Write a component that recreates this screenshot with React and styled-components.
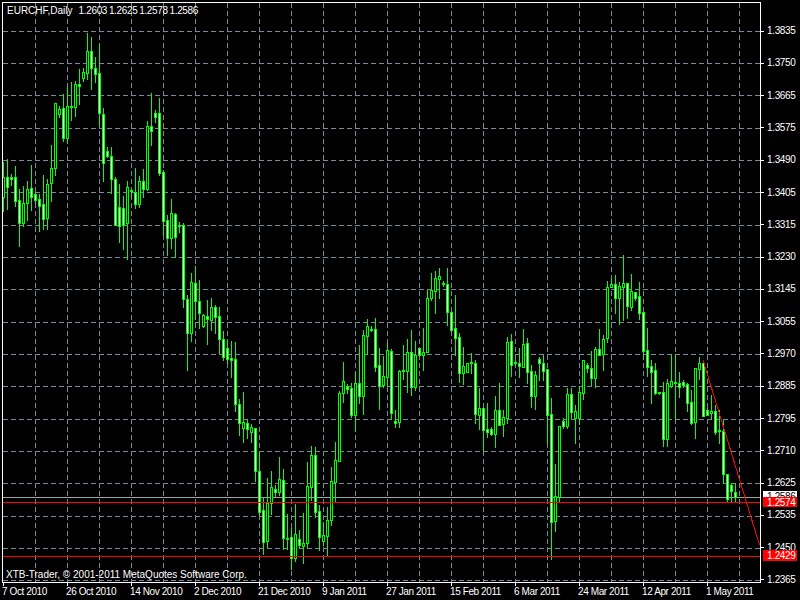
import React from "react";
import styled, { createGlobalStyle } from "styled-components";

const GlobalStyle = createGlobalStyle`
  html, body { margin: 0; padding: 0; background: #000; overflow: hidden; }
`;

const candles = [
[162,211,177,197,0],[159,209,177,187,1],[174,185,177,179,1],[166,206,177,201,1],[189,246,200,223,1],[186,226,203,223,0],[181,220,189,203,0],[165,210,188,197,1],
[192,203,194,200,1],[194,231,199,206,1],[175,229,204,219,1],[179,229,184,218,0],[145,201,168,183,0],[103,175,103,168,0],[106,117,109,114,0],[94,141,108,138,1],
[87,143,106,138,0],[82,120,106,107,1],[81,116,84,107,0],[69,104,84,86,1],[68,81,72,78,0],[33,79,51,73,0],[37,89,51,68,1],[57,82,68,74,1],
[44,126,73,113,1],[108,181,114,163,1],[147,157,151,156,1],[147,193,156,179,1],[177,225,179,225,1],[184,242,207,226,1],[196,249,208,225,1],[181,259,187,223,0],
[189,197,190,191,1],[168,208,192,204,1],[176,207,181,204,0],[169,197,181,189,1],[121,190,126,189,0],[93,145,126,131,1],[110,122,113,117,1],[98,175,113,173,1],
[170,235,172,221,1],[215,255,220,238,1],[199,248,213,238,0],[213,257,214,237,1],[222,232,225,226,1],[223,307,225,299,1],[295,370,299,333,1],[273,341,282,333,0],
[266,319,283,301,1],[280,328,301,313,1],[314,327,315,326,0],[300,344,316,319,1],[298,330,307,320,0],[305,333,307,317,1],[307,353,316,339,1],[331,360,339,357,1],
[340,363,348,359,1],[341,377,358,360,1],[342,411,359,404,1],[399,435,404,423,1],[392,442,422,428,0],[419,438,423,429,1],[424,442,427,432,0],[428,481,428,471,1],
[452,515,471,512,1],[498,554,510,542,1],[478,547,503,541,0],[471,514,487,503,0],[485,496,489,492,1],[457,495,479,492,0],[469,549,480,538,1],[514,549,538,539,1],
[528,569,537,558,1],[504,561,534,558,0],[530,548,539,545,1],[513,563,543,546,0],[462,547,486,543,0],[446,500,455,487,0],[447,517,455,512,1],[505,550,511,537,1],
[522,545,535,541,0],[507,556,520,536,0],[467,525,481,520,0],[442,502,460,482,0],[391,461,393,461,0],[362,402,381,393,0],[384,393,386,389,1],[383,417,388,415,1],
[372,431,383,415,0],[345,403,383,396,1],[330,414,335,396,0],[319,354,326,336,0],[326,331,329,330,1],[318,371,329,367,1],[348,409,365,386,1],[356,387,376,385,0],
[343,386,350,377,0],[349,419,351,413,1],[410,427,421,423,1],[370,427,371,422,0],[345,379,370,371,1],[339,392,352,371,0],[330,395,352,387,1],[341,390,355,387,0],
[348,355,348,355,1],[328,370,352,355,0],[290,352,298,352,0],[273,300,290,298,0],[271,313,278,291,0],[268,298,276,279,0],[281,286,283,284,1],[268,325,284,312,1],
[311,331,312,330,1],[295,355,328,338,1],[333,382,337,373,1],[347,384,366,373,0],[363,372,363,372,0],[353,373,362,363,1],[360,423,363,414,1],[388,429,408,415,0],
[408,450,408,430,1],[403,437,429,432,1],[427,435,429,434,1],[396,447,410,434,0],[383,425,410,425,1],[410,436,417,424,0],[337,423,342,418,0],[334,376,341,365,1],
[360,365,362,363,1],[348,377,363,366,1],[329,365,344,367,0],[338,383,343,372,1],[365,407,371,396,1],[371,409,375,396,0],[357,380,359,363,1],[355,380,363,371,1],
[369,443,369,415,1],[398,559,414,522,1],[464,531,496,521,0],[426,501,426,497,0],[418,428,421,426,1],[388,428,394,426,0],[388,418,394,412,1],[405,443,411,418,0],
[386,424,392,418,0],[360,399,360,393,0],[363,372,365,368,1],[351,385,368,378,1],[347,387,349,378,0],[329,355,349,355,1],[335,370,339,354,0],[281,342,287,338,0],
[278,287,284,287,0],[275,313,284,298,1],[282,324,286,298,0],[255,320,283,287,0],[283,318,283,306,1],[274,310,291,307,0],[292,300,292,298,1],[282,319,296,313,1],
[312,359,312,351,1],[328,376,350,367,1],[360,403,366,372,1],[363,394,370,393,1],[392,394,392,393,1],[382,446,392,439,1],[379,446,383,439,0],[354,387,381,386,0],
[354,419,382,383,1],[372,397,383,387,1],[380,387,382,385,1],[383,411,384,403,1],[390,424,402,423,1],[368,438,368,422,0],[357,379,363,369,0],[360,416,363,416,1],
[408,415,410,415,1],[395,419,411,413,0],[405,434,411,432,1],[410,443,430,431,1],[420,483,431,474,1],[474,501,474,499,1],[483,501,485,491,1],[483,501,492,497,1],
];

const hLines = [31, 63, 95, 128, 160, 192, 225, 257, 289, 322, 354, 386, 419, 451, 483, 516, 548, 580];
const vLines = Array.from({ length: 23 }, (_, k) => 35 + 32 * k);
const prices = ["1.3835", "1.3750", "1.3665", "1.3575", "1.3490", "1.3405", "1.3315", "1.3230", "1.3145", "1.3055", "1.2970", "1.2885", "1.2795", "1.2710", "1.2625", "1.2535", "1.2450", "1.2365"];
const dates = ["7 Oct 2010", "26 Oct 2010", "14 Nov 2010", "2 Dec 2010", "21 Dec 2010", "9 Jan 2011", "27 Jan 2011", "15 Feb 2011", "6 Mar 2011", "24 Mar 2011", "12 Apr 2011", "1 May 2011"];

const FONT = `"Liberation Sans", Arial, sans-serif`;
const GRID = "#778899";
const GREEN = "#00ff00";
const RED = "#ff0000";
const TIGHT = "-0.35px";

const Frame = styled.div`
  width: 800px;
  height: 600px;
  background: #000;
  display: grid;
  grid-template-columns: 761px 39px;
  grid-template-rows: 583px 17px;
  overflow: hidden;
  font-family: ${FONT};
  font-size: 10px;
  color: #fff;
`;

const Plot = styled.div`
  position: relative;
  box-sizing: border-box;
  margin: 2px 0 0 2px;
  border: 1px solid #fff;
  overflow: hidden;
`;

const ChartSvg = styled.svg`
  display: block;
  width: 757px;
  height: 579px;
  shape-rendering: crispEdges;
`;

const Title = styled.div`
  position: absolute;
  left: 4px;
  top: 2px;
  display: flex;
  gap: 6px;
  line-height: 12px;
  white-space: pre;
`;

const Quotes = styled.span`
  letter-spacing: ${TIGHT};
  word-spacing: -0.6px;
`;

const Copyright = styled.div`
  position: absolute;
  left: 3px;
  bottom: 1px;
  line-height: 12px;
  white-space: pre;
`;

const PriceAxis = styled.div`
  position: relative;
  padding-top: 15px;
`;

const PriceRow = styled.div`
  height: 32.29px;
  display: flex;
  align-items: center;
  gap: 3px;
  line-height: 12px;
  letter-spacing: ${TIGHT};
`;

const PriceTick = styled.span`
  width: 3px;
  height: 1px;
  background: #fff;
  flex: none;
`;

const PriceTag = styled.div`
  position: absolute;
  left: 2px;
  top: ${(p) => p.$top}px;
  width: 30px;
  height: ${(p) => p.$height}px;
  padding-left: 4px;
  overflow: hidden;
  line-height: 11px;
  letter-spacing: ${TIGHT};
  background: ${(p) => p.$bg};
  color: ${(p) => p.$fg};
`;

const DateAxis = styled.div`
  grid-column: 1 / span 2;
  display: flex;
  padding-left: 3px;
`;

const DateCell = styled.div`
  width: 64px;
  flex: none;
  display: flex;
  flex-direction: column;
  &::before {
    content: "";
    width: 1px;
    height: 3px;
    background: #fff;
  }
`;

const DateLabel = styled.span`
  margin: 0 0 0 -1px;
  line-height: 12px;
  white-space: nowrap;
  letter-spacing: -0.4px;
`;

function Candle({ i, d }) {
  const [wt, wb, bt, bb, white] = d;
  const x = 3 + 4 * i;
  const h = Math.max(bb - bt, 1);
  return (
    <g>
      <rect x={x} y={wt} width={1} height={wb - wt + 1} fill={GREEN} />
      <rect x={x - 1} y={bt} width={3} height={h + 1} fill={GREEN} />
      {h >= 2 && <rect x={x} y={bt + 1} width={1} height={h - 1} fill={white ? "#fff" : "#000"} />}
    </g>
  );
}

export default function App() {
  return (
    <>
      <GlobalStyle />
      <Frame>
        <Plot>
          <ChartSvg viewBox="3 3 757 579">
            {vLines.map((x) => (
              <line key={x} x1={x + 0.5} x2={x + 0.5} y1={3} y2={582} stroke={GRID} strokeDasharray="5 3" />
            ))}
            {hLines.map((y) => (
              <line key={y} x1={3} x2={760} y1={y + 0.5} y2={y + 0.5} stroke={GRID} strokeDasharray="5 3" />
            ))}
            <rect x={3} y={497} width={757} height={1} fill="#a0a0a0" />
            {candles.map((d, i) => (
              <Candle key={i} i={i} d={d} />
            ))}
            <rect x={3} y={502} width={757} height={1} fill={RED} />
            <rect x={3} y={556} width={757} height={1} fill={RED} />
            <line x1={703} y1={360} x2={759.5} y2={545} stroke={RED} strokeWidth={1} />
          </ChartSvg>
          <Title>
            <span>EURCHF,Daily</span>
            <Quotes>1.2603 1.2625 1.2578 1.2586</Quotes>
          </Title>
          <Copyright>XTB-Trader, © 2001-2011 MetaQuotes Software Corp.</Copyright>
        </Plot>
        <PriceAxis>
          {prices.map((p) => (
            <PriceRow key={p}>
              <PriceTick />
              {p}
            </PriceRow>
          ))}
          <PriceTag $top={491} $height={6} $bg="#fff" $fg="#000">1.2586</PriceTag>
          <PriceTag $top={497} $height={10} $bg={RED} $fg="#fff">1.2574</PriceTag>
          <PriceTag $top={550} $height={11} $bg={RED} $fg="#fff">1.2429</PriceTag>
        </PriceAxis>
        <DateAxis>
          {dates.map((d) => (
            <DateCell key={d}>
              <DateLabel>{d}</DateLabel>
            </DateCell>
          ))}
        </DateAxis>
      </Frame>
    </>
  );
}
